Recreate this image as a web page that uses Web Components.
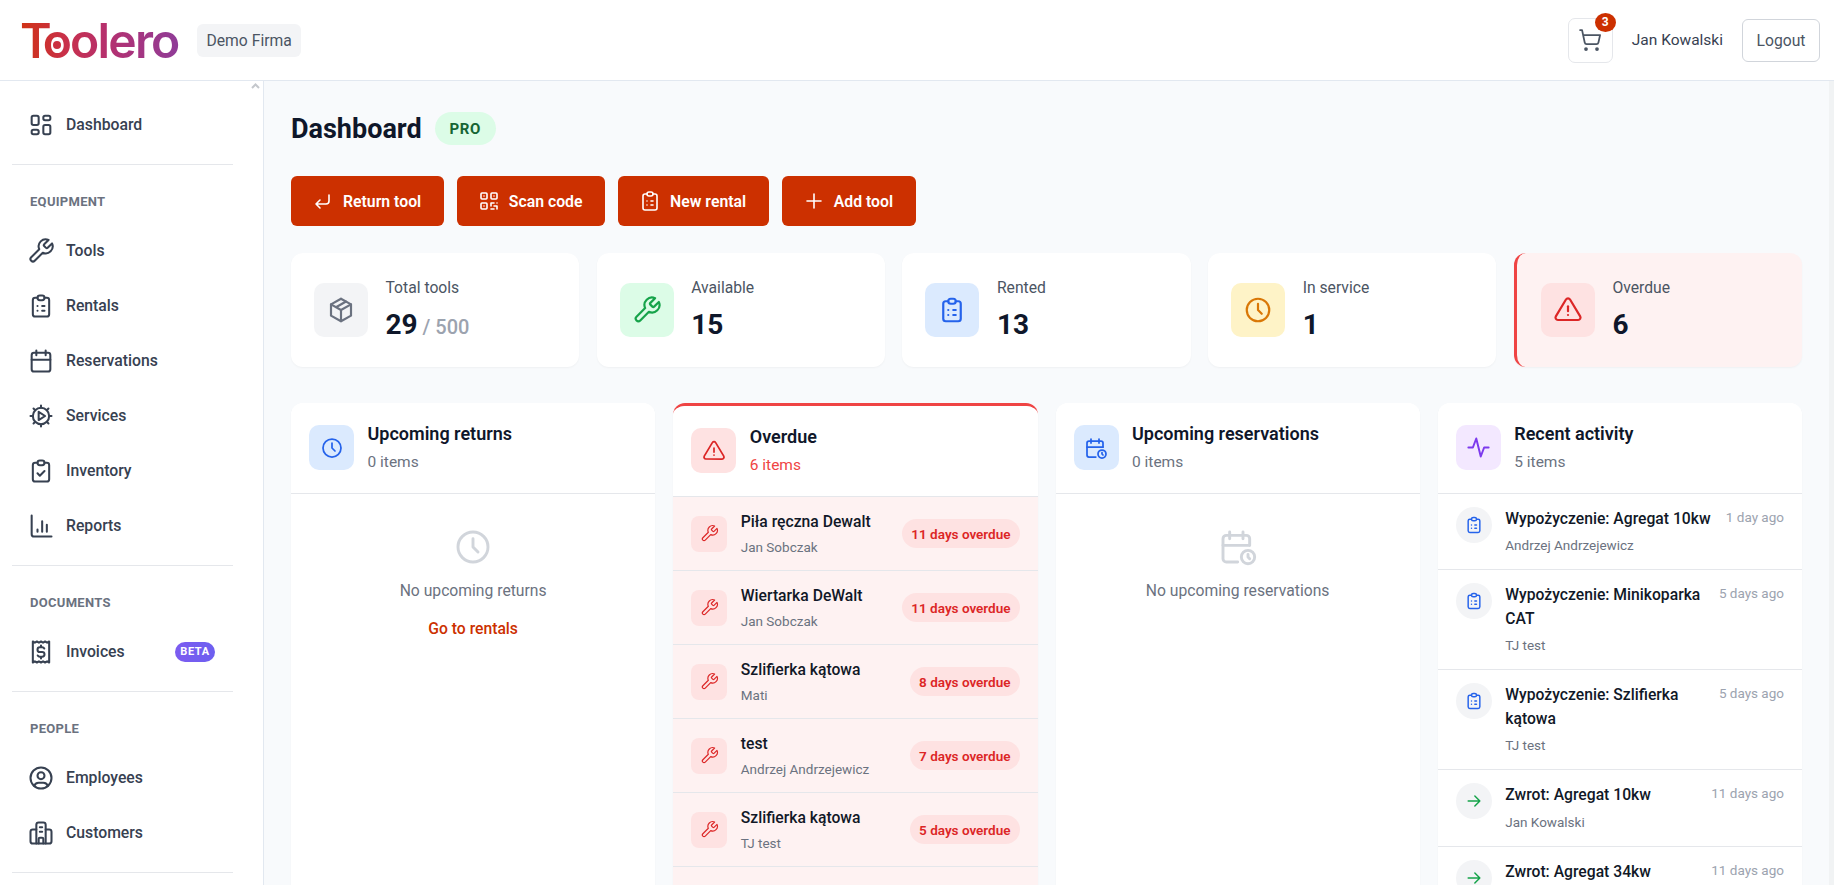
<!DOCTYPE html>
<html lang="en">
<head>
<meta charset="utf-8">
<title>Toolero</title>
<style>
html, body { margin: 0; height: 100%; overflow: hidden; }
body { font-family: Roboto, "Liberation Sans", sans-serif; color: #111827; background: #f8fafc; }
</style>
</head>
<body>
<app-shell>
  <top-bar slot="top"></top-bar>
  <side-nav slot="side">
    <nav-item icon="dashboard">Dashboard</nav-item>
    <nav-group label="EQUIPMENT">
      <nav-item icon="wrench">Tools</nav-item>
      <nav-item icon="clipboard">Rentals</nav-item>
      <nav-item icon="calendar">Reservations</nav-item>
      <nav-item icon="cog">Services</nav-item>
      <nav-item icon="check">Inventory</nav-item>
      <nav-item icon="chart">Reports</nav-item>
    </nav-group>
    <nav-group label="DOCUMENTS">
      <nav-item icon="receipt" badge="BETA">Invoices</nav-item>
    </nav-group>
    <nav-group label="PEOPLE">
      <nav-item icon="user">Employees</nav-item>
      <nav-item icon="building">Customers</nav-item>
    </nav-group>
    <nav-group></nav-group>
  </side-nav>

  <page-title>Dashboard</page-title>

  <action-bar>
    <action-btn icon="return">Return tool</action-btn>
    <action-btn icon="qr">Scan code</action-btn>
    <action-btn icon="clipboard">New rental</action-btn>
    <action-btn icon="plus">Add tool</action-btn>
  </action-bar>

  <stat-row>
    <stat-card icon="box" tone="gray" label="Total tools" value="29" extra="/ 500"></stat-card>
    <stat-card icon="wrench" tone="green" label="Available" value="15"></stat-card>
    <stat-card icon="clipboard" tone="blue" label="Rented" value="13"></stat-card>
    <stat-card icon="clock" tone="amber" label="In service" value="1"></stat-card>
    <stat-card icon="alert" tone="red" label="Overdue" value="6" alert></stat-card>
  </stat-row>

  <panel-grid>
    <panel-card icon="clock" tone="blue" title="Upcoming returns" count="0 items">
      <empty-state icon="clock" text="No upcoming returns" link="Go to rentals"></empty-state>
    </panel-card>
    <panel-card icon="alert" tone="red" title="Overdue" count="6 items" alert>
      <overdue-row name="Piła ręczna Dewalt" who="Jan Sobczak" days="11 days overdue"></overdue-row>
      <overdue-row name="Wiertarka DeWalt" who="Jan Sobczak" days="11 days overdue"></overdue-row>
      <overdue-row name="Szlifierka kątowa" who="Mati" days="8 days overdue"></overdue-row>
      <overdue-row name="test" who="Andrzej Andrzejewicz" days="7 days overdue"></overdue-row>
      <overdue-row name="Szlifierka kątowa" who="TJ test" days="5 days overdue"></overdue-row>
    </panel-card>
    <panel-card icon="calendarclock" tone="blue" title="Upcoming reservations" count="0 items">
      <empty-state icon="calendarclock" text="No upcoming reservations"></empty-state>
    </panel-card>
    <panel-card icon="activity" icon-size="27" tone="purple" title="Recent activity" count="5 items">
      <activity-row icon="clipboard" color="#2563eb" title="Wypożyczenie: Agregat 10kw" who="Andrzej Andrzejewicz" time="1 day ago"></activity-row>
      <activity-row icon="clipboard" color="#2563eb" title="Wypożyczenie: Minikoparka CAT" who="TJ test" time="5 days ago"></activity-row>
      <activity-row icon="clipboard" color="#2563eb" title="Wypożyczenie: Szlifierka kątowa" who="TJ test" time="5 days ago"></activity-row>
      <activity-row icon="arrow" color="#16a34a" title="Zwrot: Agregat 10kw" who="Jan Kowalski" time="11 days ago"></activity-row>
      <activity-row icon="arrow" color="#16a34a" title="Zwrot: Agregat 34kw" time="11 days ago"></activity-row>
    </panel-card>
  </panel-grid>
</app-shell>

<script>
const clipTop = '<path d="M9 5H7a2 2 0 0 0-2 2v12a2 2 0 0 0 2 2h10a2 2 0 0 0 2-2V7a2 2 0 0 0-2-2h-2"/><path d="M9 5a2 2 0 0 1 2-2h2a2 2 0 0 1 2 2a2 2 0 0 1-2 2h-2a2 2 0 0 1-2-2z"/>';

const ICONS = {
  dashboard: '<rect x="4" y="4" width="6" height="8" rx="1.500"/><rect x="4" y="16" width="6" height="4" rx="1.500"/><rect x="14" y="12" width="6" height="8" rx="1.500"/><rect x="14" y="4" width="6" height="4" rx="1.500"/>',
  wrench: '<path d="M14.700 6.300a1 1 0 0 0 0 1.400l1.600 1.600a1 1 0 0 0 1.400 0l3.770-3.770a6 6 0 0 1-7.940 7.940l-6.910 6.910a2.120 2.120 0 0 1-3-3l6.910-6.910a6 6 0 0 1 7.940-7.940l-3.760 3.760z"/>',
  clipboard: clipTop + '<path d="M9 12h.01M13 12h2M9 16h.01M13 16h2"/>',
  check: clipTop + '<path d="M9 14l2 2l4-4"/>',
  calendar: '<rect x="4" y="5" width="16" height="16" rx="2"/><path d="M16 3v4M8 3v4M4 11h16"/>',
  cog: '<circle cx="12" cy="12" r="7"/><path d="M12 3v2M12 19v2M3 12h2M19 12h2M5.600 5.600L7 7M17 17l1.400 1.400M5.600 18.400L7 17M17 7l1.400-1.400"/><path d="M10 8.500v7l5.500-3.500z"/>',
  chart: '<path d="M4 3v16a2 2 0 0 0 2 2h15"/><path d="M9 17v-2M13 17V8M17 17v-6"/>',
  receipt: '<path d="M5 3l1.750 1l1.750-1l1.750 1L12 3l1.750 1l1.750-1l1.750 1L19 3v18l-1.750-1l-1.750 1l-1.750-1L12 21l-1.750-1l-1.750 1l-1.750-1L5 21z"/><path d="M14.800 9a2 2 0 0 0-1.800-1h-2a2 2 0 0 0 0 4h2a2 2 0 0 1 0 4h-2a2 2 0 0 1-1.800-1M12 6.500V8M12 16v1.500"/>',
  user: '<circle cx="12" cy="12" r="9"/><circle cx="12" cy="10" r="3"/><path d="M6.200 18.850A4 4 0 0 1 10 16h4a4 4 0 0 1 3.830 2.850"/>',
  building: '<path d="M8 21V5a2 2 0 0 1 2-2h4a2 2 0 0 1 2 2v16"/><path d="M8 9H5a2 2 0 0 0-2 2v8a2 2 0 0 0 2 2h14a2 2 0 0 0 2-2v-8a2 2 0 0 0-2-2h-3"/><path d="M11 7h2M11 11h2M10 21v-4a1 1 0 0 1 1-1h2a1 1 0 0 1 1 1v4"/>',
  return: '<path d="M18 6v6a3 3 0 0 1-3 3H5l4-4m0 8l-4-4"/>',
  qr: '<rect x="4" y="4" width="6" height="6" rx="1"/><rect x="14" y="4" width="6" height="6" rx="1"/><rect x="4" y="14" width="6" height="6" rx="1"/><path d="M7 17v.01M7 7v.01M17 7v.01M14 14h3M20 14v.01M14 14v3M14 20h3M17 17h3M20 17v3"/>',
  plus: '<path d="M12 5v14M5 12h14"/>',
  cart: '<circle cx="8" cy="21" r="1" fill="currentColor"/><circle cx="19" cy="21" r="1" fill="currentColor"/><path d="M2.050 2.050h2l2.660 12.420a2 2 0 0 0 2 1.580h9.780a2 2 0 0 0 1.950-1.570l1.650-7.430H5.120"/>',
  box: '<path d="M12 3l8 4.500v9L12 21l-8-4.500v-9L12 3"/><path d="M12 12l8-4.500M12 12v9M12 12L4 7.500M16 5.250l-8 4.500"/>',
  clock: '<circle cx="12" cy="12" r="9"/><path d="M12 7v5l3 3"/>',
  alert: '<path d="M12 9v4"/><path d="M10.360 3.590L2.260 17.130a1.910 1.910 0 0 0 1.640 2.870h16.210a1.910 1.910 0 0 0 1.640-2.870L13.640 3.590a1.910 1.910 0 0 0-3.270 0z"/><path d="M12 16h.01"/>',
  calendarclock: '<path d="M11.800 21H5a2 2 0 0 1-2-2V7a2 2 0 0 1 2-2h12a2 2 0 0 1 2 2v4"/><circle cx="18" cy="18" r="4"/><path d="M15 3v4M7 3v4M3 11h16M18 16.500V18l1 1"/>',
  activity: '<path d="M3 12h4l3-8l4 16l3-8h4"/>',
  arrow: '<path d="M5 12h14M13 18l6-6M13 6l6 6"/>'
};

class XIcon extends HTMLElement {
  connectedCallback() {
    const size = this.getAttribute('size') || 24;
    const sw = this.getAttribute('stroke') || 1.75;
    this.attachShadow({ mode: 'open' }).innerHTML = `
      <style>:host{display:inline-flex;flex:none} svg{display:block}</style>
      <svg width="${size}" height="${size}" viewBox="0 0 24 24" fill="none" stroke="currentColor"
        stroke-width="${sw}" stroke-linecap="round" stroke-linejoin="round">${ICONS[this.getAttribute('name')] || ''}</svg>`;
  }
}
customElements.define('x-icon', XIcon);

const shellTpl = document.createElement('template');
shellTpl.innerHTML = `
<style>
:host { display: grid; grid-template-rows: 81px 1fr; grid-template-columns: 264px 1fr; height: 885px; width: 1834px; }
.top { grid-column: 1 / 3; }
main { overflow: hidden; padding: 31px 32px 0 27px; background: #f8fafc; position: relative; box-sizing: border-box; min-width: 0; }
.track { position: absolute; top: 0; right: 0; bottom: 0; width: 5px; background: #f1f3f4; }
</style>
<div class="top"><slot name="top"></slot></div>
<slot name="side"></slot>
<main><slot></slot><div class="track"></div></main>`;
class AppShell extends HTMLElement {
  constructor() {
    super();
    this.attachShadow({ mode: 'open' }).appendChild(shellTpl.content.cloneNode(true));
  }
}
customElements.define('app-shell', AppShell);

const topTpl = document.createElement('template');
topTpl.innerHTML = `
<style>
:host { display: flex; align-items: center; height: 81px; box-sizing: border-box; background: #fff; border-bottom: 1px solid #e2e8f0; padding: 0 14px 0 20px; }
.logo { position: relative; font: 600 48px/49px Inter, sans-serif; letter-spacing: -1.800px; background: linear-gradient(90deg, #d03214 0%, #c8304c 30%, #b5306f 55%, #8f3c98 100%); -webkit-background-clip: text; background-clip: text; color: transparent; width: 159px; height: 49px; white-space: nowrap; }
.logo span { letter-spacing: -9px; }
.logo i { position: absolute; left: 32.500px; top: 25px; width: 8px; height: 8px; border-radius: 50%; background: #cb3040; }
.org { margin-left: 18px; height: 33px; padding: 0 9.500px; display: flex; align-items: center; background: #f3f4f6; border-radius: 6px; font-size: 15.700px; color: #4b5563; }
.right { margin-left: auto; display: flex; align-items: center; }
.cart { position: relative; width: 45px; height: 45px; box-sizing: border-box; border: 1px solid #e5e7eb; border-radius: 7px; display: flex; align-items: center; justify-content: center; color: #4b5563; }
.cart b { position: absolute; top: -6px; right: -4px; width: 21px; height: 19px; border-radius: 50%; background: #cc3000; color: #fff; font-size: 12px; font-weight: 700; display: flex; align-items: center; justify-content: center; }
.name { margin-left: 19px; font-size: 15.500px; color: #374151; }
.logout { margin-left: 19px; width: 78px; height: 43px; box-sizing: border-box; border: 1px solid #d1d5db; border-radius: 6px; display: flex; align-items: center; justify-content: center; font-size: 15.700px; color: #4b5563; }
</style>
<div class="logo"><span>T</span>oolero<i></i></div>
<div class="org">Demo Firma</div>
<div class="right">
  <div class="cart"><x-icon name="cart" size="24"></x-icon><b>3</b></div>
  <span class="name">Jan Kowalski</span>
  <span class="logout">Logout</span>
</div>`;
class TopBar extends HTMLElement {
  constructor() {
    super();
    this.attachShadow({ mode: 'open' }).appendChild(topTpl.content.cloneNode(true));
  }
}
customElements.define('top-bar', TopBar);

const sideTpl = document.createElement('template');
sideTpl.innerHTML = `
<style>
:host { display: block; position: relative; background: #fff; border-right: 1px solid #e2e8f0; padding-top: 16px; overflow: hidden; box-sizing: border-box; height: 804px; }
svg { position: absolute; top: 2px; right: 3px; }
</style>
<svg width="9" height="6" viewBox="0 0 9 6"><path d="M1 5l3.500-3.500L8 5" fill="none" stroke="#c4c7cc" stroke-width="2"/></svg>
<slot></slot>`;
class SideNav extends HTMLElement {
  constructor() {
    super();
    this.attachShadow({ mode: 'open' }).appendChild(sideTpl.content.cloneNode(true));
  }
}
customElements.define('side-nav', SideNav);

class NavGroup extends HTMLElement {
  connectedCallback() {
    const label = this.getAttribute('label');
    this.attachShadow({ mode: 'open' }).innerHTML = `
      <style>
      :host { display: block; }
      hr { border: 0; border-top: 1px solid #e5e7eb; margin: 12px 30px 0 12px; }
      .lbl { margin: 29px 0 13px 30px; height: 16px; line-height: 16px; font-size: 13px; font-weight: 700; letter-spacing: .3px; color: #6b7280; }
      </style>
      <hr>${label ? `<div class="lbl">${label}</div>` : ''}<slot></slot>`;
  }
}
customElements.define('nav-group', NavGroup);

class NavItem extends HTMLElement {
  connectedCallback() {
    const badge = this.getAttribute('badge');
    this.attachShadow({ mode: 'open' }).innerHTML = `
      <style>
      :host { display: flex; align-items: center; height: 55px; padding-left: 27px; font-size: 15.750px; font-weight: 500; color: #374151; }
      x-icon { margin-right: 11px; }
      b { margin-left: auto; margin-right: 48px; width: 40px; height: 20px; border-radius: 10px; background: linear-gradient(90deg, #7c5cf0, #6d5ff0); color: #fff; font-size: 11px; letter-spacing: .6px; display: flex; align-items: center; justify-content: center; }
      </style>
      <x-icon name="${this.getAttribute('icon')}" size="28"></x-icon><slot></slot>${badge ? `<b>${badge}</b>` : ''}`;
  }
}
customElements.define('nav-item', NavItem);

class PageTitle extends HTMLElement {
  constructor() {
    super();
    this.attachShadow({ mode: 'open' }).innerHTML = `
      <style>
      :host { display: flex; align-items: center; height: 33px; gap: 13px; }
      h1 { margin: 0; font-size: 27px; font-weight: 700; color: #0f172a; }
      span { height: 33px; width: 61px; border-radius: 17px; background: #dcfce7; color: #166534; font-size: 15px; font-weight: 700; letter-spacing: .6px; display: flex; align-items: center; justify-content: center; }
      </style>
      <h1><slot></slot></h1><span>PRO</span>`;
  }
}
customElements.define('page-title', PageTitle);

class ActionBar extends HTMLElement {
  constructor() {
    super();
    this.attachShadow({ mode: 'open' }).innerHTML = `
      <style>:host { display: flex; gap: 13px; margin: 31px 0 27px; }</style><slot></slot>`;
  }
}
customElements.define('action-bar', ActionBar);

class ActionBtn extends HTMLElement {
  connectedCallback() {
    this.attachShadow({ mode: 'open' }).innerHTML = `
      <style>
      :host { display: flex; align-items: center; gap: 8px; height: 50px; padding: 0 22.600px 0 20px; border-radius: 6px; background: #cc3000; color: #fff; font-size: 15.800px; font-weight: 600; box-sizing: border-box; }
      </style>
      <x-icon name="${this.getAttribute('icon')}" size="24" stroke="1.600"></x-icon><slot></slot>`;
  }
}
customElements.define('action-btn', ActionBtn);

const TONES = {
  gray: ['#f3f4f6', '#6b7280'],
  green: ['#dcfce7', '#16a34a'],
  blue: ['#dbeafe', '#2563eb'],
  amber: ['#fef3c7', '#d97706'],
  red: ['#fee2e2', '#dc2626'],
  purple: ['#f3e8ff', '#7c3aed']
};

class StatRow extends HTMLElement {
  constructor() {
    super();
    this.attachShadow({ mode: 'open' }).innerHTML = `
      <style>:host { display: grid; grid-template-columns: repeat(5, 1fr); gap: 17.600px; margin-bottom: 36px; }</style><slot></slot>`;
  }
}
customElements.define('stat-row', StatRow);

class StatCard extends HTMLElement {
  connectedCallback() {
    const [bg, fg] = TONES[this.getAttribute('tone')];
    const alert = this.hasAttribute('alert');
    const extra = this.getAttribute('extra');
    this.attachShadow({ mode: 'open' }).innerHTML = `
      <style>
      :host { display: flex; height: 114px; box-sizing: border-box; padding: 30px 23px; gap: 17.500px; border-radius: 12px; background: ${alert ? '#fef2f2' : '#fff'}; box-shadow: 0 1px 2px rgba(0,0,0,.04); ${alert ? 'border-left: 3px solid #ef4444; padding-left: 24px;' : ''} }
      .ic { width: 54px; height: 54px; border-radius: 10px; background: ${bg}; color: ${fg}; display: flex; align-items: center; justify-content: center; flex: none; }
      .lbl { font-size: 15.700px; line-height: 18px; margin-top: -4px; color: #4b5563; }
      .val { font-size: 28px; font-weight: 700; line-height: 34px; margin-top: 11px; color: #0f172a; }
      .val small { font-size: 20px; font-weight: 500; color: #9ca3af; margin-left: -2px; }
      </style>
      <div class="ic"><x-icon name="${this.getAttribute('icon')}" size="30"></x-icon></div>
      <div><div class="lbl">${this.getAttribute('label')}</div>
      <div class="val">${this.getAttribute('value')}${extra ? ` <small>${extra}</small>` : ''}</div></div>`;
  }
}
customElements.define('stat-card', StatCard);

class PanelGrid extends HTMLElement {
  constructor() {
    super();
    this.attachShadow({ mode: 'open' }).innerHTML = `
      <style>:host { display: grid; grid-template-columns: repeat(4, 1fr); gap: 18px; align-items: start; }</style><slot></slot>`;
  }
}
customElements.define('panel-grid', PanelGrid);

class PanelCard extends HTMLElement {
  connectedCallback() {
    const [bg, fg] = TONES[this.getAttribute('tone')];
    const alert = this.hasAttribute('alert');
    this.attachShadow({ mode: 'open' }).innerHTML = `
      <style>
      :host { display: block; min-height: 500px; background: ${alert ? '#fef2f2' : '#fff'}; border-radius: 12px; box-shadow: 0 1px 2px rgba(0,0,0,.04); overflow: hidden; ${alert ? 'border-top: 3px solid #ef4444;' : ''} }
      header { display: flex; gap: 13.500px; height: 91px; box-sizing: border-box; padding: 22px 18px 0; background: #fff; border-bottom: 1px solid #e5e7eb; }
      .ic { width: 45px; height: 45px; border-radius: 10px; background: ${bg}; color: ${fg}; display: flex; align-items: center; justify-content: center; flex: none; }
      h3 { margin: -2px 0 0; font-size: 18px; font-weight: 600; line-height: 22px; color: #0f172a; }
      p { margin: 6px 0 0; font-size: 15.500px; line-height: 22px; color: ${alert ? '#ef4444' : '#6b7280'}; }
      </style>
      <header><div class="ic"><x-icon name="${this.getAttribute('icon')}" size="${this.getAttribute('icon-size') || 24}"></x-icon></div>
      <div><h3>${this.getAttribute('title')}</h3><p>${this.getAttribute('count')}</p></div></header>
      <slot></slot>`;
  }
}
customElements.define('panel-card', PanelCard);

class EmptyState extends HTMLElement {
  connectedCallback() {
    const link = this.getAttribute('link');
    this.attachShadow({ mode: 'open' }).innerHTML = `
      <style>
      :host { display: flex; flex-direction: column; align-items: center; padding-top: 33px; font-size: 15.700px; color: #6b7280; }
      x-icon { color: #d1d5db; }
      .txt { margin-top: 12.500px; line-height: 22px; }
      a { margin-top: 16px; line-height: 22px; color: #cc3000; font-weight: 500; }
      </style>
      <x-icon name="${this.getAttribute('icon')}" size="40"></x-icon>
      <div class="txt">${this.getAttribute('text')}</div>${link ? `<a>${link}</a>` : ''}`;
  }
}
customElements.define('empty-state', EmptyState);

class OverdueRow extends HTMLElement {
  connectedCallback() {
    this.attachShadow({ mode: 'open' }).innerHTML = `
      <style>
      :host { display: flex; align-items: center; height: 74px; box-sizing: border-box; padding: 0 18px; gap: 13.500px; background: #fef2f2; border-bottom: 1px solid #e5e7eb; }
      .ic { width: 36px; height: 36px; border-radius: 8px; background: #fee2e2; color: #dc2626; display: flex; align-items: center; justify-content: center; flex: none; }
      .main { flex: 1; min-width: 0; }
      .n { font-size: 15.700px; font-weight: 500; line-height: 22px; color: #111827; }
      .w { font-size: 13.500px; line-height: 18px; margin-top: 4.500px; color: #6b7280; }
      .pill { height: 29px; padding: 0 9px; border-radius: 15px; background: #fee2e2; color: #dc2626; font-size: 13.500px; font-weight: 600; display: flex; align-items: center; white-space: nowrap; }
      </style>
      <div class="ic"><x-icon name="wrench" size="19" stroke="1.500"></x-icon></div>
      <div class="main"><div class="n">${this.getAttribute('name')}</div><div class="w">${this.getAttribute('who')}</div></div>
      <span class="pill">${this.getAttribute('days')}</span>`;
  }
}
customElements.define('overdue-row', OverdueRow);

class ActivityRow extends HTMLElement {
  connectedCallback() {
    const who = this.getAttribute('who');
    this.attachShadow({ mode: 'open' }).innerHTML = `
      <style>
      :host { display: flex; align-items: flex-start; box-sizing: border-box; padding: 13px 18px 15px; border-bottom: 1px solid #e5e7eb; }
      .ic { width: 36px; height: 36px; margin-right: 13.500px; border-radius: 50%; background: #f3f4f6; color: ${this.getAttribute('color')}; display: flex; align-items: center; justify-content: center; flex: none; }
      .main { flex: 1; min-width: 0; }
      .n { font-size: 15.700px; font-weight: 500; line-height: 23.800px; color: #111827; }
      .w { font-size: 13.500px; line-height: 18px; margin-top: 5.500px; color: #6b7280; }
      .t { font-size: 13.500px; line-height: 20px; color: #9ca3af; white-space: nowrap; margin-left: 4px; }
      </style>
      <div class="ic"><x-icon name="${this.getAttribute('icon')}" size="20"></x-icon></div>
      <div class="main"><div class="n">${this.getAttribute('title')}</div>${who ? `<div class="w">${who}</div>` : ''}</div>
      <span class="t">${this.getAttribute('time')}</span>`;
  }
}
customElements.define('activity-row', ActivityRow);
</script>
</body>
</html>
